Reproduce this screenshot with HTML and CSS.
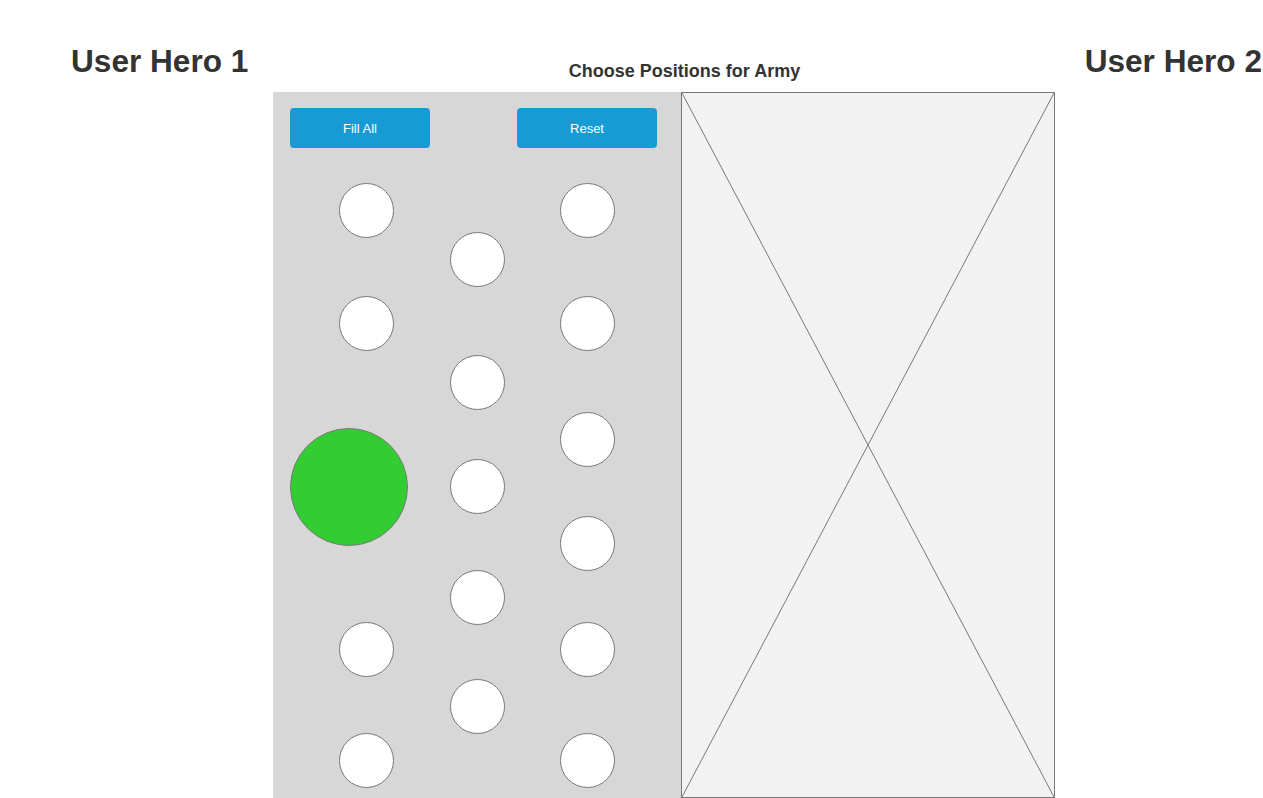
FILE: index.html
```html
<!DOCTYPE html>
<html lang="en">
<head>
<meta charset="utf-8">
<title>Choose Positions for Army</title>
<link rel="stylesheet" href="styles.css">
</head>
<body>
<div class="page">
  <header class="top">
    <h1 class="hero hero-left">User Hero 1</h1>
    <h2 class="title">Choose Positions for Army</h2>
    <h1 class="hero hero-right">User Hero 2</h1>
  </header>
  <main class="stage">
    <section class="board">
      <div class="actions">
        <button class="btn" type="button">Fill All</button>
        <button class="btn" type="button">Reset</button>
      </div>
      <span class="slot" style="left:66px;top:91px"></span>
      <span class="slot" style="left:66px;top:204px"></span>
      <span class="slot" style="left:66px;top:530px"></span>
      <span class="slot" style="left:66px;top:641px"></span>
      <span class="slot" style="left:177px;top:140px"></span>
      <span class="slot" style="left:177px;top:263px"></span>
      <span class="slot" style="left:177px;top:367px"></span>
      <span class="slot" style="left:177px;top:478px"></span>
      <span class="slot" style="left:177px;top:587px"></span>
      <span class="slot" style="left:287px;top:91px"></span>
      <span class="slot" style="left:287px;top:204px"></span>
      <span class="slot" style="left:287px;top:320px"></span>
      <span class="slot" style="left:287px;top:424px"></span>
      <span class="slot" style="left:287px;top:530px"></span>
      <span class="slot" style="left:287px;top:641px"></span>
      <span class="slot slot-hero" style="left:17px;top:336px"></span>
    </section>
    <section class="placeholder">
      <svg class="cross" viewBox="0 0 100 100" preserveAspectRatio="none" aria-hidden="true">
        <line x1="0" y1="0" x2="100" y2="100" vector-effect="non-scaling-stroke"/>
        <line x1="100" y1="0" x2="0" y2="100" vector-effect="non-scaling-stroke"/>
      </svg>
    </section>
  </main>
</div>
</body>
</html>
```
FILE: styles.css
```css
* { box-sizing: border-box; }
html, body { margin: 0; padding: 0; background: #ffffff; }
body {
  font-family: "Liberation Sans", Arial, sans-serif;
  color: #333333;
  width: 1263px;
  height: 798px;
  overflow: hidden;
}
.page { width: 1263px; }
.top {
  display: flex;
  height: 92px;
}
.hero {
  margin: 0;
  font-size: 31.6px;
  font-weight: 700;
  line-height: 32px;
  padding-top: 45px;
  color: #333333;
}
.hero-left {
  width: 273px;
  padding-left: 71px;
}
.title {
  margin: 0;
  width: 782px;
  padding-left: 41px;
  padding-top: 60px;
  font-size: 18px;
  line-height: 22px;
  font-weight: 700;
  text-align: center;
  color: #333333;
}
.hero-right {
  flex: 1;
  text-align: right;
  padding-right: 1px;
}
.stage {
  display: flex;
  margin-left: 273px;
  height: 706px;
}
.board {
  position: relative;
  width: 408px;
  height: 706px;
  background: #d7d7d7;
}
.actions {
  display: flex;
  gap: 87px;
  padding: 16px 0 0 17px;
}
.btn {
  width: 140px;
  height: 40px;
  border: 0;
  border-radius: 4px;
  background: #169bd5;
  color: #ffffff;
  font-family: "Liberation Sans", Arial, sans-serif;
  font-size: 13px;
  padding: 0;
}
.slot {
  position: absolute;
  width: 55px;
  height: 55px;
  border-radius: 50%;
  border: 1px solid #797979;
  background: #ffffff;
}
.slot-hero {
  width: 118px;
  height: 118px;
  background: #33cc33;
}
.placeholder {
  width: 374px;
  height: 706px;
  border: 1px solid #797979;
  background: #f2f2f2;
}
.cross {
  display: block;
  width: 100%;
  height: 100%;
}
.cross line {
  stroke: #797979;
  stroke-width: 1;
}
```
